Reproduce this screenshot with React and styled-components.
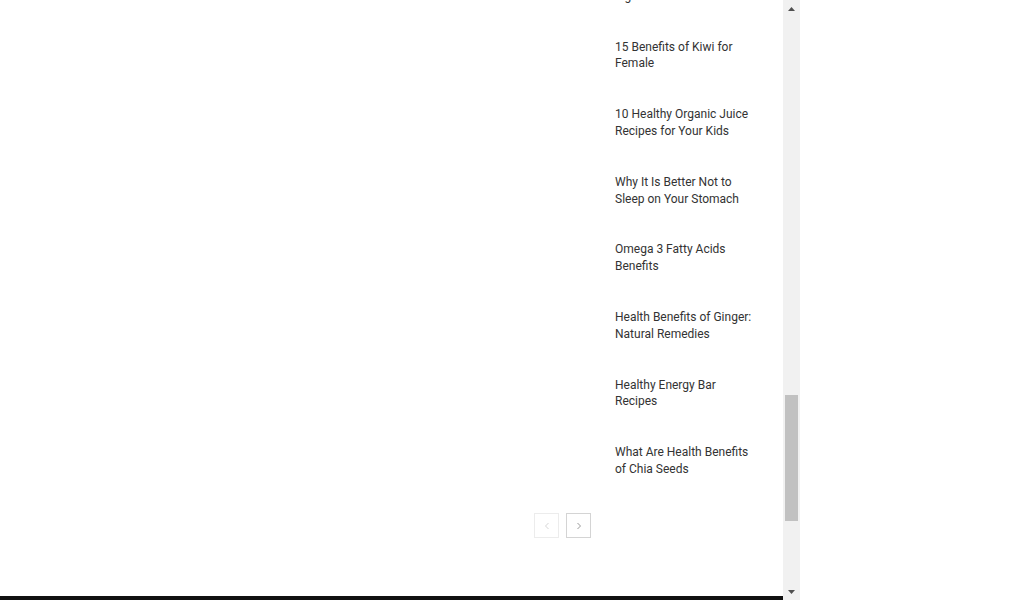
import React from 'react';
import styled, {createGlobalStyle} from 'styled-components';

const Global = createGlobalStyle`
    html, body{
        margin:0;
        padding:0;
        background:#fff;
        overflow:hidden;
    }
    body{
        font-family:Roboto, "Liberation Sans", Arial, sans-serif;
    }
`;

const Page = styled.div`
    display:flex;
    width:1024px;
    height:600px;
    background:#fff;
`;

const Frame = styled.div`
    display:flex;
    flex-direction:column;
    width:783px;
    height:600px;
`;

const Viewport = styled.div`
    flex:1;
    overflow:hidden;
    display:grid;
    grid-template-columns:591px 142px;
    column-gap:24px;
    align-items:start;
`;

const Main = styled.div`
    display:flex;
    justify-content:flex-end;
    gap:7px;
    padding-top:513px;
`;

const PageBtn = styled.div`
    display:flex;
    justify-content:center;
    align-items:center;
    width:23px;
    height:23px;
    border:1px solid ${p => p.disabled ? '#ececec' : '#d4d4d4'};
    color:${p => p.disabled ? '#d6d6d6' : '#9a9a9a'};
    background:#fff;
`;

const Sidebar = styled.ul`
    list-style:none;
    margin:-29px 0 0 0;
    padding:0;
    display:flex;
    flex-direction:column;
    gap:34px;
`;

const Item = styled.li`
    font-size:12px;
    line-height:1.4;
    color:#333;
    height:33.6px;
`;

const BottomBar = styled.div`
    height:4px;
    background:#111;
`;

const Scrollbar = styled.div`
    display:flex;
    flex-direction:column;
    width:17px;
    height:600px;
    background:#f1f1f1;
`;

const Arrow = styled.div`
    display:flex;
    justify-content:center;
    align-items:center;
    height:17px;
    color:#505050;
`;

const Track = styled.div`
    flex:1;
    display:flex;
    flex-direction:column;
    align-items:center;
    padding-top:${p => p.offset}px;
`;

const Thumb = styled.div`
    width:13px;
    height:${p => p.size}px;
    background:#c1c1c1;
`;

const posts = [
    'Top 7 Benefits of Eating Figs',
    '15 Benefits of Kiwi for Female',
    '10 Healthy Organic Juice Recipes for Your Kids',
    'Why It Is Better Not to Sleep on Your Stomach',
    'Omega 3 Fatty Acids Benefits',
    'Health Benefits of Ginger: Natural Remedies',
    'Healthy Energy Bar Recipes',
    'What Are Health Benefits of Chia Seeds',
];

const Chevron = ({dir}) => (
    <svg width="8" height="8" viewBox="0 0 8 8" fill="none" stroke="currentColor" strokeWidth="1">
        {dir === 'left'
            ? <path d="M5.5 1 L2.5 4 L5.5 7"/>
            : <path d="M2.5 1 L5.5 4 L2.5 7"/>}
    </svg>
);

const Tri = ({down}) => (
    <svg width="7" height="4" viewBox="0 0 7 4">
        {down
            ? <path d="M0 0 H7 L3.5 4 Z" fill="currentColor"/>
            : <path d="M0 4 H7 L3.5 0 Z" fill="currentColor"/>}
    </svg>
);

const App = () => {
    return(
        <Page>
            <Global/>
            <Frame>
                <Viewport>
                    <Main>
                        <PageBtn disabled><Chevron dir="left"/></PageBtn>
                        <PageBtn><Chevron dir="right"/></PageBtn>
                    </Main>
                    <Sidebar>
                        {posts.map(p => <Item key={p}>{p}</Item>)}
                    </Sidebar>
                </Viewport>
                <BottomBar/>
            </Frame>
            <Scrollbar>
                <Arrow><Tri/></Arrow>
                <Track offset={378}>
                    <Thumb size={126}/>
                </Track>
                <Arrow><Tri down/></Arrow>
            </Scrollbar>
        </Page>
    )
}

export default App;
